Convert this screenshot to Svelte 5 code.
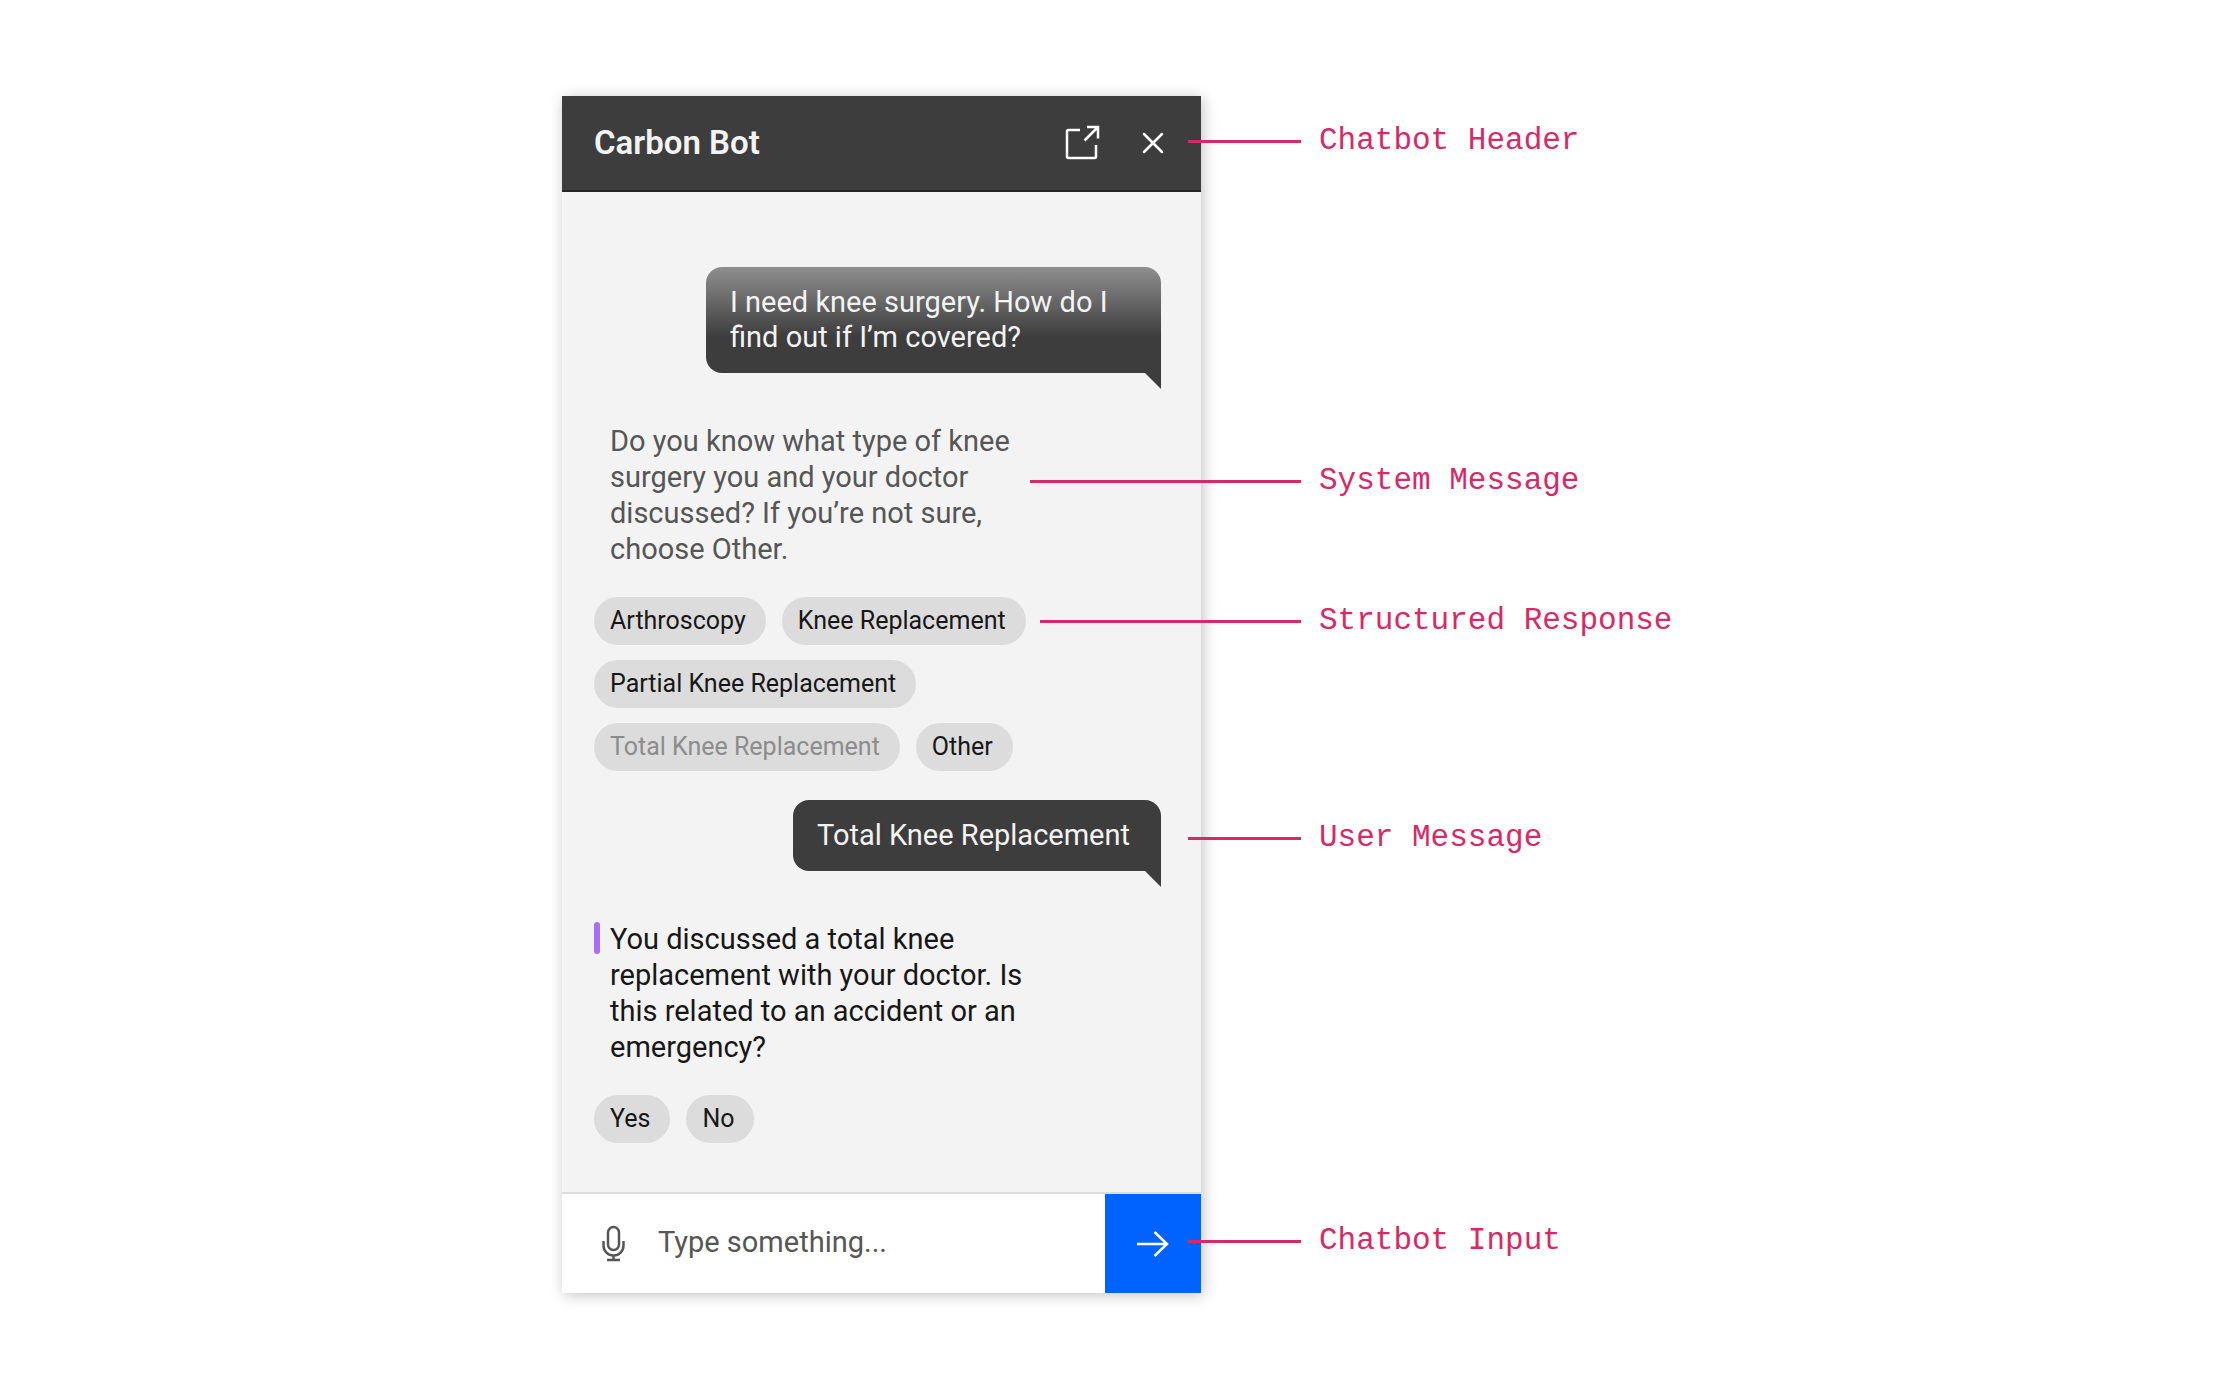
<script>
  const procedures = [
    [{ label: 'Arthroscopy' }, { label: 'Knee Replacement' }],
    [{ label: 'Partial Knee Replacement' }],
    [{ label: 'Total Knee Replacement', used: true }, { label: 'Other' }]
  ];
  const answers = ['Yes', 'No'];
  let draft = $state('');
</script>

{#snippet callout(text, place)}
  <div class="callout {place}">
    <span class="line"></span>
    <span class="name">{text}</span>
  </div>
{/snippet}

<main class="page">
  <div class="figure">
    <section class="panel" aria-label="Carbon Bot chat">
      <header class="header">
        <h1>Carbon Bot</h1>
        <button class="icon-button" type="button" aria-label="Open in new window">
          <svg viewBox="0 0 40 40" aria-hidden="true">
            <path d="M18 7H6.500Q5 7 5 8.500V33.500Q5 35 6.500 35H32.500Q34 35 34 33.500V22" />
            <path d="M25 4H36V15.500M36 4L22.500 17.500" />
          </svg>
        </button>
        <button class="icon-button" type="button" aria-label="Close">
          <svg viewBox="0 0 40 40" aria-hidden="true">
            <path d="M11 11L29 29M29 11L11 29" stroke-linecap="round" />
          </svg>
        </button>
        {@render callout('Chatbot Header', 'at-header')}
      </header>

      <div class="messages">
        <div class="row user">
          <p class="bubble faded">I need knee surgery. How do I find out if I’m covered?</p>
        </div>

        <div class="row system">
          <p class="message past">Do you know what type of knee surgery you and your doctor discussed? If you’re not sure, choose Other.</p>
          {@render callout('System Message', 'at-system')}
        </div>

        <div class="row choices">
          {#each procedures as group}
            <div class="chips">
              {#each group as item}
                <button class="chip" type="button" disabled={item.used}>{item.label}</button>
              {/each}
            </div>
          {/each}
          {@render callout('Structured Response', 'at-choices')}
        </div>

        <div class="row user">
          <p class="bubble">Total Knee Replacement</p>
          {@render callout('User Message', 'at-user')}
        </div>

        <div class="row system">
          <span class="marker"></span>
          <p class="message">You discussed a total knee replacement with your doctor. Is this related to an accident or an emergency?</p>
        </div>

        <div class="row choices">
          <div class="chips">
            {#each answers as answer}
              <button class="chip" type="button">{answer}</button>
            {/each}
          </div>
        </div>
      </div>

      <form class="composer" onsubmit={(event) => event.preventDefault()}>
        <button class="icon-button mic" type="button" aria-label="Speak">
          <svg viewBox="0 0 40 40" aria-hidden="true">
            <rect x="14" y="3" width="11" height="23" rx="5.500" />
            <path d="M9.500 17V21.500A10 10 0 0 0 29.500 21.500V17M19.500 31.500V36M13 36H26" />
          </svg>
        </button>
        <input type="text" aria-label="Message" placeholder="Type something..." bind:value={draft} />
        <button class="send" type="submit" aria-label="Send">
          <svg viewBox="0 0 40 40" aria-hidden="true">
            <path d="M4 20H34M21.500 8L34 20L21.500 32" />
          </svg>
        </button>
        {@render callout('Chatbot Input', 'at-input')}
      </form>
    </section>
  </div>
</main>

<style>
  :global(body) {
    background: #fff;
  }

  .page {
    display: flex;
    justify-content: center;
    padding: 96px 24px;
    font-family: Roboto, 'Noto Sans', sans-serif;
    font-size: 29px;
    line-height: 36px;
    color: #171717;
  }

  .figure {
    flex: 0 1 1116px;
    padding-right: 477px;
    box-sizing: border-box;
  }

  .panel {
    background: #f3f3f3;
    box-shadow: 2px 2px 14px rgba(0, 0, 0, 0.24);
  }

  h1,
  p {
    margin: 0;
  }

  button,
  input {
    margin: 0;
    padding: 0;
    border: 0;
    background: none;
    color: inherit;
    font: inherit;
  }

  svg {
    display: block;
    width: 40px;
    height: 40px;
    fill: none;
    stroke: currentColor;
    stroke-width: 2.5;
  }

  .header {
    position: relative;
    display: flex;
    align-items: center;
    gap: 31px;
    min-height: 94px;
    padding: 0 28px 0 32px;
    border-bottom: 2px solid #262626;
    background: #3d3d3d;
    color: #fff;
  }

  h1 {
    flex: 1;
    font-size: 33px;
    font-weight: 600;
    color: #f3f3f3;
  }

  .messages {
    padding: 75px 0 49px;
  }

  .row {
    position: relative;
    padding: 0 40px 0 32px;
  }

  .user {
    display: flex;
    justify-content: flex-end;
    margin-bottom: 50px;
  }

  .bubble {
    position: relative;
    max-width: 400px;
    padding: 18px 31px 18px 24px;
    border-radius: 16px 16px 0 16px;
    background: #3d3d3d;
    color: #f3f3f3;
    line-height: 35px;
  }

  .bubble::after {
    content: '';
    position: absolute;
    top: 100%;
    right: 0;
    width: 16px;
    height: 16px;
    background: #3d3d3d;
    clip-path: polygon(0 0, 100% 0, 100% 100%);
  }

  .faded {
    background: linear-gradient(#8f8f8f, #3d3d3d 66%);
  }

  .system {
    margin-bottom: 30px;
  }

  .message {
    max-width: 432px;
    padding-left: 16px;
  }

  .past {
    color: #565656;
  }

  .marker {
    position: absolute;
    top: 1px;
    left: 32px;
    width: 6px;
    height: 32px;
    border-radius: 3px;
    background: #a66efa;
  }

  .choices {
    display: grid;
    gap: 15px;
  }

  .choices + .user {
    margin-top: 29px;
  }

  .chips {
    display: flex;
    flex-wrap: wrap;
    gap: 16px;
  }

  .chip {
    height: 48px;
    padding: 0 20px 0 16px;
    border-radius: 24px;
    background: #dcdcdc;
    font-size: 25px;
  }

  .chip:disabled {
    color: #8c8c8c;
  }

  .composer {
    position: relative;
    display: flex;
    align-items: stretch;
    min-height: 99px;
    border-top: 2px solid #dcdcdc;
    background: #fff;
    color: #565656;
  }

  .mic {
    margin: 0 24px 0 32px;
  }

  input {
    flex: 1;
    min-width: 0;
    padding-bottom: 4px;
    outline: none;
  }

  input::placeholder {
    color: #565656;
    opacity: 1;
  }

  .send {
    display: grid;
    place-items: center;
    width: 96px;
    background: #0062ff;
    color: #fff;
  }

  .callout {
    --reach: 13px;
    position: absolute;
    left: calc(100% - var(--reach));
    display: flex;
    align-items: center;
    gap: 18px;
    color: #d62a67;
    font-family: 'Liberation Mono', monospace;
    font-size: 31px;
    white-space: nowrap;
  }

  .line {
    width: calc(var(--reach) + 100px);
    height: 3px;
    background: currentColor;
  }

  .at-header {
    top: 27px;
  }

  .at-system {
    --reach: 171px;
    top: 40px;
  }

  .at-choices {
    --reach: 161px;
    top: 6px;
  }

  .at-user {
    top: 20px;
  }

  .at-input {
    top: 29px;
  }
</style>
